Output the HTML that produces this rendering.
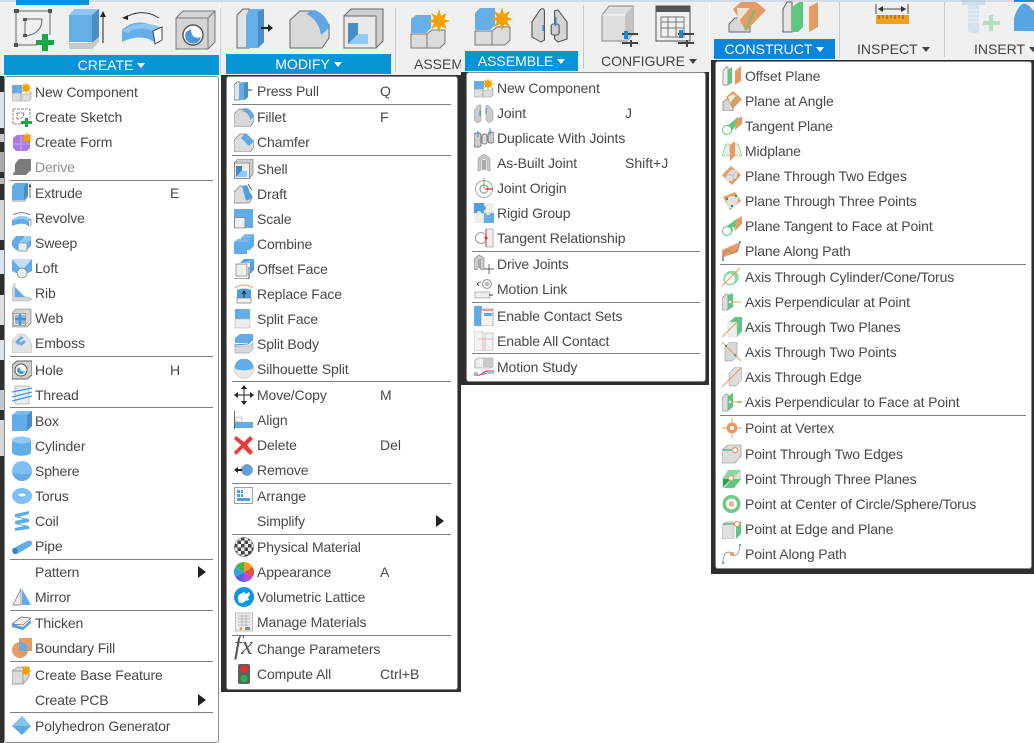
<!DOCTYPE html>
<html><head><meta charset="utf-8"><style>
html,body{margin:0;padding:0;background:#fff}
#p{position:relative;width:1034px;height:743px;overflow:hidden;background:#fff;font:14px/20px "Liberation Sans",sans-serif;color:#484848}
.a{position:absolute}
.d{position:absolute;background:#2f2f2f}
.m{position:absolute;background:#fff;border:1px solid #8a8a8a;border-radius:3px;box-sizing:border-box}
.w{position:absolute;top:0;width:0;height:0}
.r{position:absolute;left:0;width:300px;height:20px;white-space:nowrap}
.r svg{position:absolute;left:7px;top:0;width:20px;height:20px}
.r span{position:absolute;left:30px;letter-spacing:-.12px}
.r b{position:absolute;left:165px;font-weight:normal}
.r i{position:absolute;width:0;height:0;border-left:8px solid #222;border-top:6px solid transparent;border-bottom:6px solid transparent;top:4px}
.m2 .r svg,.m3 .r svg{left:8px}
.m2 .r span,.m3 .r span{left:31px}
.m2 .r b{left:154px}.m3 .r b{left:159px}
.s{position:absolute;height:1px;background:#808080}
.h{position:absolute;color:#fff;text-align:center;line-height:20px;height:20px;box-sizing:border-box}
.l{position:absolute;color:#444;white-space:nowrap}
.t{display:inline-block;width:0;height:0;border-top:5px solid currentColor;border-left:4px solid transparent;border-right:4px solid transparent;vertical-align:2px;margin-left:4px}
.v{position:absolute;width:1px;background:#c8c8c8}
</style></head><body><div id="p">

<!-- toolbar -->
<div class="a" style="left:0;top:0;width:1034px;height:76px;background:#f0f0f0"></div>
<div class="a" style="left:0;top:0;width:1034px;height:2px;background:#d3dbe9"></div>
<div class="a" style="left:16px;top:0;width:73px;height:5px;background:#0696d7"></div>
<div class="a" style="left:1014px;top:0;width:20px;height:2px;background:#0696d7"></div>
<div class="a" style="left:219px;top:3px;width:1px;height:72px;background:#fff"></div>
<div class="a" style="left:709px;top:3px;width:1px;height:58px;background:#fff"></div>
<div class="v" style="left:220px;top:8px;height:66px"></div>
<div class="v" style="left:395px;top:8px;height:64px"></div>
<div class="v" style="left:583px;top:5px;height:64px"></div>
<div class="v" style="left:839px;top:2px;height:55px"></div>
<div class="v" style="left:944px;top:2px;height:55px"></div>

<svg class="a" style="left:0;top:0" width="1034" height="60" viewBox="0 0 1034 60">
<!-- sketch -->
<g fill="none" stroke="#666" stroke-width="1"><path d="M16 11H50V35M16 11V45H37M25 19H42M25 19V34M42 19Q42 34 25 36"/></g>
<g fill="#555"><rect x="14" y="9" width="5" height="4"/><rect x="48" y="9" width="4" height="4"/><rect x="14" y="43" width="4" height="4"/><rect x="23" y="18" width="4" height="3"/><rect x="23" y="34" width="4" height="3"/></g>
<path d="M42 34h6v6h6v5h-6v6h-6v-6h-6v-5h6z" fill="#1ca64c"/>
<!-- extrude -->
<path d="M69 42V15l5-5h25l-7 5v27z" fill="#66aee8"/><path d="M69 15l5-6h25l-7 6z" fill="#8cc6f4"/><path d="M92 15l7-6v28l-7 6z" fill="#4a8ec7"/><path d="M69 43h23l7-6v5l-7 7H69z" fill="#c9c9c9"/><path d="M103 43V14" stroke="#222" stroke-width="1"/><path d="M100 17l3-6 3 6z" fill="#222"/>
<!-- revolve -->
<path d="M122 30c10-10 26-10 35 0l-3 12c-8-6-20-6-32 0z" fill="#66aee8"/><path d="M122 31c10-9 30-9 40-3l-5 5c-10-6-22-6-29 0z" fill="#8cc6f4"/><path d="M153 31l9-4v13l-7 4z" fill="#fff" stroke="#444"/><path d="M124 18c12-7 24-7 35 0" fill="none" stroke="#333"/><path d="M122 18l6-3v5z" fill="#222"/>
<!-- hole -->
<path d="M176 18l7-7h32v31l-7 7h-32z" fill="#d4d4d4" stroke="#777"/><path d="M176 18h32v31M208 18l7-7" fill="none" stroke="#777"/><circle cx="193" cy="35" r="10" fill="#fff" stroke="#555" stroke-width="1.4"/><path d="M186 32a8 8 0 1 0 15 5c-5 2-10 0-10-8z" fill="#4a96d8"/>
<!-- press pull -->
<path d="M237 48V15l6-6h6v39z" fill="#e3e3e3" stroke="#666"/><path d="M246 48V15l4-6h14v33l-6 6z" fill="#66aee8"/><path d="M258 12v36l6-6V9z" fill="#4a8ec7"/><path d="M261 28h8" stroke="#222" stroke-width="2"/><path d="M268 24l5 4-5 4z" fill="#222"/>
<!-- fillet -->
<path d="M290 48V20l10-9h15l14 14v13l-7 10z" fill="#d9d9d9" stroke="#666"/><path d="M306 14l8-4c8 2 15 10 15 18l-8 7c-1-9-7-18-15-21z" fill="#5ea7e2"/>
<!-- shell -->
<path d="M344 48V16l7-7h32v32l-7 7z" fill="#cfcfcf" stroke="#666"/><rect x="344" y="16" width="32" height="32" fill="#e9e9e9" stroke="#666"/><path d="M348 23h10v11h10v10h-20z" fill="#4a8ec7"/><path d="M358 34h10v10h-20z" fill="#90cbf8"/>
<!-- assemble clipped -->
<g><path d="M411 48V34h17v14z" fill="#dcdcdc" stroke="#777"/><path d="M427 48V34l5-4h13v13l-5 5z" fill="#dcdcdc" stroke="#777"/><path d="M411 33V19l5-4h15v13l-5 5z" fill="#66aee8"/><path d="M439 9l2 7 6-3-3 6 6 2-6 2 3 6-6-3-2 7-2-7-6 3 3-6-6-2 6-2-3-6 6 3z" fill="#f5a000"/></g>
<g transform="translate(64,-9)"><path d="M411 54V40h17v14z" fill="#dcdcdc" stroke="#777"/><path d="M428 54V40l5-4h13v13l-5 5z" fill="#dcdcdc" stroke="#777"/><path d="M411 39V22l5-5h15v17l-5 5z" fill="#66aee8"/><path d="M438 16l2 7 6-3-3 6 6 2-6 2 3 6-6-3-2 7-2-7-6 3 3-6-6-2 6-2-3-6 6 3z" fill="#f5a000"/></g>
<!-- joint toolbar -->
<g transform="translate(532 0) scale(1.13 1) translate(-526 0)"><path d="M526 22l7-12c2-2 4-2 4 2v28l-3 2-8-5zM557 22l-8-12-3 1v28l3 3 8-3z" fill="#d4d4d4" stroke="#555"/><rect x="543" y="24" width="7" height="11" rx="2" fill="#ccc" stroke="#555"/><path d="M536 25v6M547 17v9" stroke="#2f8ee0" stroke-width="1.5"/></g>
<!-- configure -->
<g transform="translate(12,0)"><path d="M590 15l7-9h24v28l-6 7h-25z" fill="#dedede" stroke="#888"/><path d="M613 15l8-9v28l-6 7h-2z" fill="#c2c2c2"/><path d="M590 15h23" stroke="#fff"/><path d="M610 34h16M610 43h16" stroke="#444" stroke-width="2"/><rect x="612" y="31" width="4" height="8" fill="#1a86d8"/><path d="M619 40v7" stroke="#444" stroke-width="2"/></g>
<g transform="translate(18,0)"><rect x="638" y="6" width="34" height="35" fill="#f0f0f0" stroke="#555"/><rect x="638" y="6" width="34" height="6" fill="#555"/><path d="M643 17h23v20h-23zM643 22h23M643 28h23M650 17v20M658 17v20" fill="none" stroke="#777"/><path d="M660 34h16M660 43h16" stroke="#444" stroke-width="2"/><rect x="661" y="30" width="4" height="8" fill="#1a86d8"/><path d="M669 40v7" stroke="#444" stroke-width="2"/></g>
<!-- construct -->
<g transform="translate(23,0)"><path d="M706 24l6-6h15v14h-21z" fill="#d8d8d8" stroke="#666"/><path d="M710 9l8-7h15l10 8-20 21z" fill="#e59b62"/><path d="M714 8h13l-12 14z" fill="#f0e5da"/><path d="M722 30l10-20" stroke="#5cc77e" stroke-width="1.5"/></g>
<g transform="translate(29,0)"><path d="M754 32V9l4-7h5v30z" fill="#e4e4e4" stroke="#666"/><path d="M763 32V7l7-5h4v25l-5 5z" fill="#5cc77e"/><path d="M780 32V7l9-5v25z" fill="#e59b62"/></g>
<!-- inspect -->
<g transform="translate(38,0)"><path d="M838 4v10M870 4v10M840 9h28" stroke="#444" fill="none"/><path d="M840 9l5-3v6zM868 9l-5-3v6z" fill="#333"/><rect x="838" y="15" width="33" height="9" fill="#f0a020"/><path d="M841 15v4M845 15v3M849 15v4M853 15v3M857 15v4M861 15v3M865 15v4" stroke="#8a5a10"/></g>
<!-- insert -->
<g opacity=".45"><g transform="translate(45,0)"><rect x="917" y="0" width="23" height="5" fill="#a9c8e2"/><path d="M923 5h11v27l-5 2-6-3z" fill="#b5d2ea"/><path d="M923 10h11M923 14h11M923 18h11M923 22h11" stroke="#e8f1f8"/></g><path d="M983 21h6v-6h4v6h7v4h-7v6h-4v-6h-6z" fill="#66cc88"/></g>
<path d="M1014 31V18c3-10 8-16 12-14 3 1 6 5 8 7V31z" fill="#5aa5e0"/>
</svg>

<div class="h" style="left:4px;top:55px;width:215px;background:#0696d7">CREATE<span class="t"></span></div>
<div class="h" style="left:226px;top:54px;width:165px;background:#0696d7">MODIFY<span class="t"></span></div>
<div class="h" style="left:465px;top:51px;width:113px;background:#0696d7">ASSEMBLE<span class="t"></span></div>
<div class="h" style="left:714px;top:39px;width:121px;background:#0a85dc">CONSTRUCT<span class="t"></span></div>
<div class="l" style="left:414px;top:54px;width:47px;overflow:hidden">ASSEMBLE</div>
<div class="l" style="left:601px;top:51px">CONFIGURE<span class="t"></span></div>
<div class="l" style="left:857px;top:39px">INSPECT<span class="t"></span></div>
<div class="l" style="left:974px;top:39px">INSERT<span class="t"></span></div>

<!-- left edge fragments -->
<div class="d" style="left:0;top:76px;width:4px;height:667px"></div>
<div class="a" style="left:0;top:92px;width:4px;height:36px;background:#dfe3ea"></div>
<div class="a" style="left:0;top:134px;width:4px;height:8px;background:#c9c9c9"></div>
<div class="a" style="left:0;top:152px;width:4px;height:20px;background:#aaa"></div>
<div class="a" style="left:0;top:178px;width:4px;height:6px;background:#bbb"></div>
<div class="a" style="left:0;top:200px;width:4px;height:40px;background:#d8d8d8"></div>
<div class="a" style="left:0;top:250px;width:4px;height:24px;background:#d8e3ef"></div>
<div class="a" style="left:0;top:295px;width:4px;height:30px;background:#dfdfdf"></div>
<div class="a" style="left:0;top:340px;width:4px;height:20px;background:#dfe3ea"></div>
<div class="a" style="left:0;top:390px;width:4px;height:20px;background:#bfc7cf"></div>
<div class="a" style="left:0;top:420px;width:4px;height:36px;background:#d8d8d8"></div>

<!-- shadows -->
<div class="d" style="left:221px;top:75px;width:240px;height:617px"></div>
<div class="d" style="left:461px;top:72px;width:248px;height:313px"></div>
<div class="d" style="left:711px;top:60px;width:323px;height:514px"></div>

<!-- CREATE -->
<div class="m" style="left:4px;top:76px;width:215px;height:667px"></div>
<div class="s" style="left:10px;top:180px;width:203px"></div>
<div class="s" style="left:10px;top:356px;width:203px"></div>
<div class="s" style="left:10px;top:407px;width:203px"></div>
<div class="s" style="left:10px;top:559px;width:203px"></div>
<div class="s" style="left:10px;top:610px;width:203px"></div>
<div class="s" style="left:10px;top:661px;width:203px"></div>
<div class="s" style="left:10px;top:712px;width:203px"></div>
<div class="w" style="left:5px">
<div class="r" style="top:82px"><svg viewBox="0 0 20 20"><path d="M0 19v-8h9v8z" fill="#ddd" stroke="#999" stroke-width=".6"/><path d="M9 19v-7h8l2-2v7l-2 2z" fill="#ddd" stroke="#999" stroke-width=".6"/><path d="M0 11V3h10v8z" fill="#62ade8"/><path d="M14 0l1 3 3-1-1 3 3 1-3 1 1 3-3-1-1 3-1-3-3 1 1-3-3-1 3-1-1-3 3 1z" fill="#f5a000"/></svg><span>New Component</span></div>
<div class="r" style="top:107px"><svg viewBox="0 0 20 20"><path d="M1 2h17v9M1 2v15h10M5 6h7M5 6v6M12 6q0 6-7 6" fill="none" stroke="#666" stroke-width=".8" stroke-dasharray="3 1"/><path d="M13 11h3v3h4v3h-4v3h-3v-3H9v-3h4z" fill="#1ca64c"/></svg><span>Create Sketch</span></div>
<div class="r" style="top:132px"><svg viewBox="0 0 20 20"><path d="M1 6l4-3h9l4 4v9l-3 3H4l-3-3z" fill="#a77be0"/><path d="M1 12h17M9 4v15" stroke="#c7a8ee" fill="none"/><path d="M15 0l1 3 3-1-1 3 2 1-2 1 1 3-3-1-1 3-1-3-3 1 1-3-3-1 3-1-1-3 3 1z" fill="#f5a000"/></svg><span>Create Form</span></div>
<div class="r" style="top:157px;color:#909090"><svg viewBox="0 0 20 20"><path d="M1 17l2-3V7l4-5h12v11l-5 5H1z" fill="#7a7a7a"/></svg><span>Derive</span></div>
<div class="r" style="top:183px"><svg viewBox="0 0 20 20"><path d="M0 17V3l3-3h13v13l-3 4z" fill="#62ade8"/><path d="M12 3l4-3v13l-4 4z" fill="#4a8ec7"/><path d="M0 17h13l3-4v2l-3 4H0z" fill="#c9c9c9"/><path d="M18 15V2M17 4l1-3 1 3" stroke="#333" fill="none" stroke-width=".7"/></svg><span>Extrude</span><b>E</b></div>
<div class="r" style="top:208px"><svg viewBox="0 0 20 20"><path d="M0 12c5-5 13-5 19 0l-2 6c-4-3-10-3-17 0z" fill="#62ade8"/><path d="M1 11c5-4 13-4 18 0l-3 2c-5-3-10-3-14 0z" fill="#90cbf8"/><path d="M16 13l3-2v6l-2 1z" fill="#fff" stroke="#555" stroke-width=".5"/><path d="M1 7c5-3 12-3 17 0" fill="none" stroke="#555" stroke-width=".7"/></svg><span>Revolve</span></div>
<div class="r" style="top:233px"><svg viewBox="0 0 20 20"><path d="M0 8l4-5h8l2 4-6 1v8l-4 1-4-4z" fill="#62ade8"/><path d="M8 8l6-5h5v6l-3 2h-6z" fill="#90cbf8"/><rect x="6" y="10" width="9" height="8" fill="#eee" stroke="#777" stroke-width=".7"/><path d="M15 10l4-4v7l-4 4z" fill="#62ade8"/></svg><span>Sweep</span></div>
<div class="r" style="top:258px"><svg viewBox="0 0 20 20"><path d="M0 1l8 9h4l8-9v12l-6 3H6l-6-3z" fill="#62ade8"/><path d="M0 1h20l-8 9H8z" fill="#c5e0f6"/><circle cx="10" cy="15" r="5" fill="#eee" stroke="#777" stroke-width=".7"/></svg><span>Loft</span></div>
<div class="r" style="top:283px"><svg viewBox="0 0 20 20"><path d="M0 18V5l3-5v14l14 0 3 2-3 2z" fill="#d4d4d4" stroke="#aaa" stroke-width=".5"/><path d="M3 4l10 10H3z" fill="#62ade8"/></svg><span>Rib</span></div>
<div class="r" style="top:308px"><svg viewBox="0 0 20 20"><path d="M0 5l4-4h15v14l-4 4H0z" fill="#d4d4d4" stroke="#777" stroke-width=".6"/><rect x="1.500" y="5.500" width="12" height="12" fill="#eee" stroke="#777" stroke-width=".6"/><rect x="3" y="7" width="10" height="9" fill="#9bb4c8"/><path d="M8 6v11M3 11h11" stroke="#3e97e0" stroke-width="2.500"/></svg><span>Web</span></div>
<div class="r" style="top:333px"><svg viewBox="0 0 20 20"><path d="M0 20V9C2 4 6 1 10 1c5 1 9 6 10 12v7z" fill="#e4e4e4" stroke="#999" stroke-width=".4"/><path d="M3 9l6-6 3 2-5 3 2 1-3 3zM7 11l5-4 2 2-5 4z" fill="#62ade8"/></svg><span>Emboss</span></div>
<div class="r" style="top:360px"><svg viewBox="0 0 20 20"><path d="M0 5l5-4h15v14l-5 4H0z" fill="#cfcfcf" stroke="#666"/><circle cx="9" cy="10" r="6" fill="#fff" stroke="#555"/><path d="M5 9a4 4 0 1 0 8 2c-3 1-5 0-5-4z" fill="#4a96d8"/></svg><span>Hole</span><b>H</b></div>
<div class="r" style="top:385px"><svg viewBox="0 0 20 20"><rect x="3" y="1" width="14" height="18" fill="#ececec" stroke="#999" stroke-width=".6"/><path d="M0 7l20-4M0 12l20-5M0 16l20-5" stroke="#2f9ae8" stroke-width="1.200"/></svg><span>Thread</span></div>
<div class="r" style="top:411px"><svg viewBox="0 0 20 20"><path d="M0 5l5-5h15v15l-5 5H0z" fill="#4a8ec7"/><rect y="4" width="15" height="16" fill="#62ade8"/><path d="M0 4l5-4h15l-5 4z" fill="#78bdf2"/></svg><span>Box</span></div>
<div class="r" style="top:436px"><svg viewBox="0 0 20 20"><path d="M0 4v12c0 5 19 5 19 0V4z" fill="#62ade8"/><ellipse cx="9.500" cy="4" rx="9.500" ry="3.500" fill="#90cbf8"/></svg><span>Cylinder</span></div>
<div class="r" style="top:461px"><svg viewBox="0 0 20 20"><circle cx="10" cy="10" r="10" fill="#7cc0f6"/><path d="M0 11c3 3 17 3 20 0-1 5-5 9-10 9S1 16 0 11z" fill="#62ade8"/></svg><span>Sphere</span></div>
<div class="r" style="top:486px"><svg viewBox="0 0 20 20"><ellipse cx="10" cy="10" rx="10" ry="8" fill="#7cc0f6"/><ellipse cx="10" cy="9" rx="4" ry="2" fill="#fff" stroke="#4a8ec7" stroke-width=".5"/></svg><span>Torus</span></div>
<div class="r" style="top:511px"><svg viewBox="0 0 20 20"><path d="M3 3l14-3v3L7 6l10 2v3L7 13l10 2v3L3 20v-3l9-2-9-2v-3l9-2-9-2z" fill="#5caee8"/></svg><span>Coil</span></div>
<div class="r" style="top:536px"><svg viewBox="0 0 20 20"><path d="M0 13L15 5c3-1 5 0 5 2s-1 3-3 4L5 18c-3 1-5-1-5-5z" fill="#62ade8"/><ellipse cx="3" cy="15" rx="2.500" ry="3" fill="#3d80b8"/></svg><span>Pipe</span></div>
<div class="r" style="top:562px"><span>Pattern</span><i style="left:193px"></i></div>
<div class="r" style="top:587px"><svg viewBox="0 0 20 20"><path d="M1 18L9 2v16z" fill="#ececec" stroke="#777" stroke-width=".7"/><path d="M10 2l9 16h-9z" fill="#62ade8"/></svg><span>Mirror</span></div>
<div class="r" style="top:613px"><svg viewBox="0 0 20 20"><path d="M0 11l9-7 10 1-8 7z" fill="#eee" stroke="#666" stroke-width=".7"/><path d="M0 11l11 3 8-7v3l-8 7-11-3z" fill="#4f9ee0"/></svg><span>Thicken</span></div>
<div class="r" style="top:638px"><svg viewBox="0 0 20 20"><rect x="7" y="0" width="13" height="13" fill="#e59b62"/><circle cx="8" cy="12" r="8" fill="#e59b62"/><path d="M7 4a8 8 0 0 1 9 9H7z" fill="#62ade8"/></svg><span>Boundary Fill</span></div>
<div class="r" style="top:665px"><svg viewBox="0 0 20 20"><path d="M0 6l6-4h11v10l-6 7H0z" fill="#dcdcdc" stroke="#888" stroke-width=".7"/><path d="M0 6h11v13" fill="none" stroke="#888" stroke-width=".7"/><path d="M14 0l1 3 3-1-1 3 3 1-3 1 1 3-3-1-1 3-1-3-3 1 1-3-3-1 3-1-1-3 3 1z" fill="#f5a000"/></svg><span>Create Base Feature</span></div>
<div class="r" style="top:690px"><span>Create PCB</span><i style="left:193px"></i></div>
<div class="r" style="top:716px"><svg viewBox="0 0 20 20"><path d="M10 0l9 10-9 9-10-9z" fill="#5ea7e2"/><path d="M10 0l9 10H0z" fill="#85c2f2"/></svg><span>Polyhedron Generator</span></div>
</div>

<!-- MODIFY -->
<div class="m" style="left:226px;top:76px;width:232px;height:614px"></div>
<div class="s" style="left:232px;top:104px;width:219px"></div>
<div class="s" style="left:232px;top:155px;width:219px"></div>
<div class="s" style="left:232px;top:381px;width:219px"></div>
<div class="s" style="left:232px;top:483px;width:219px"></div>
<div class="s" style="left:232px;top:534px;width:219px"></div>
<div class="s" style="left:232px;top:635px;width:219px"></div>
<div class="w m2" style="left:226px">
<div class="r" style="top:81px"><svg viewBox="0 0 20 20"><path d="M0 19V4l3-3h3v18z" fill="#e3e3e3" stroke="#666" stroke-width=".7"/><path d="M5 19V3l3-2h6v15l-3 3z" fill="#62ade8"/><path d="M10 3v16l4-3V1z" fill="#4a8ec7"/><path d="M14 9h4" stroke="#333"/></svg><span>Press Pull</span><b>Q</b></div>
<div class="r" style="top:107px"><svg viewBox="0 0 20 20"><path d="M0 20V7l5-5h7l8 7v5l-4 6z" fill="#d9d9d9" stroke="#888" stroke-width=".7"/><path d="M7 3l5-2c4 1 8 5 8 9l-4 3c0-5-4-8-9-10z" fill="#5ea7e2"/></svg><span>Fillet</span><b>F</b></div>
<div class="r" style="top:132px"><svg viewBox="0 0 20 20"><path d="M0 20V8l6-6h5l9 8v5l-4 5z" fill="#dcdcdc" stroke="#777" stroke-width=".7"/><path d="M7 6l5-5 8 8-5 5z" fill="#5ea7e2"/></svg><span>Chamfer</span></div>
<div class="r" style="top:159px"><svg viewBox="0 0 20 20"><path d="M0 20V4l4-4h15v15l-4 5z" fill="#cfcfcf" stroke="#777" stroke-width=".7"/><rect x=".5" y="4" width="15" height="15.500" fill="#eee" stroke="#777" stroke-width=".7"/><path d="M2 7h6v5h5v6H2z" fill="#3d86c4"/><path d="M7 12h6v6H2z" fill="#8fcaf8"/></svg><span>Shell</span></div>
<div class="r" style="top:184px"><svg viewBox="0 0 20 20"><path d="M0 19V8l6-6h4l8 10v2l-3 5z" fill="#dcdcdc" stroke="#777" stroke-width=".7"/><path d="M8 2l5-1 5 13-6 3z" fill="#4f9ee0"/><path d="M14 0l4 6" stroke="#333" stroke-width=".7"/></svg><span>Draft</span></div>
<div class="r" style="top:209px"><svg viewBox="0 0 20 20"><rect width="19" height="19" fill="#62ade8"/><rect x=".5" y="8.500" width="10.500" height="10.500" fill="#eee" stroke="#777" stroke-width=".7"/></svg><span>Scale</span></div>
<div class="r" style="top:234px"><svg viewBox="0 0 20 20"><path d="M7 4l4-4h9v12l-4 4h-3v4H0V8l4-3h3z" fill="#62ade8"/><path d="M7 4h9l4-4h-9zM0 8h13l3-3H4z" fill="#78bdf2"/></svg><span>Combine</span></div>
<div class="r" style="top:259px"><svg viewBox="0 0 20 20"><path d="M6 4l4-4h10v11l-4 4V4z" fill="#4f9ee0"/><path d="M6 4h10l4-4" fill="#78bdf2"/><path d="M0 20h15V8" fill="none" stroke="#555"/><rect x="2" y="5" width="11" height="12" fill="#eee" stroke="#777" stroke-width=".7"/></svg><span>Offset Face</span></div>
<div class="r" style="top:284px"><svg viewBox="0 0 20 20"><path d="M1 4c5-4 13-4 18 0" fill="none" stroke="#e59b62"/><path d="M3 6c4-2 10-2 14 0v10H3z" fill="#4f9ee0"/><path d="M10 7v7M8 10l2-3 2 3" stroke="#222" fill="none"/><rect x="3" y="14" width="14" height="5" fill="#f0f0f0" stroke="#777" stroke-width=".7"/></svg><span>Replace Face</span></div>
<div class="r" style="top:309px"><svg viewBox="0 0 20 20"><rect x="1" width="15" height="9" fill="#62ade8"/><rect x="1" y="10" width="15" height="9" fill="#eee" stroke="#aaa" stroke-width=".5"/><path d="M1 9.500h15" stroke="#6db4ec"/></svg><span>Split Face</span></div>
<div class="r" style="top:334px"><svg viewBox="0 0 20 20"><path d="M1 4l5-4h13v6l-4 3H1z" fill="#62ade8"/><path d="M1 12h14l4-3v6l-4 4H1z" fill="#d9d9d9" stroke="#888" stroke-width=".5"/><path d="M0 11l14-1 5-5" stroke="#3e97e0" fill="none"/></svg><span>Split Body</span></div>
<div class="r" style="top:359px"><svg viewBox="0 0 20 20"><circle cx="10" cy="10" r="9.500" fill="#e8e8e8" stroke="#aaa" stroke-width=".5"/><path d="M.5 9a9.500 9.500 0 0 1 19 0c-3 3-16 3-19 0z" fill="#62ade8"/></svg><span>Silhouette Split</span></div>
<div class="r" style="top:385px"><svg viewBox="0 0 20 20"><path d="M10 2v16M1 10h18" stroke="#222"/><path d="M10 0l3 4H7zM10 20l3-4H7zM0 10l4-3v6zM20 10l-4-3v6z" fill="#222"/></svg><span>Move/Copy</span><b>M</b></div>
<div class="r" style="top:410px"><svg viewBox="0 0 20 20"><path d="M.5 1v18" stroke="#666"/><rect x="2" y="7" width="6" height="5" fill="#f2f2f2" stroke="#aaa" stroke-width=".5"/><rect x="1" y="12" width="18" height="6" fill="#62ade8"/></svg><span>Align</span></div>
<div class="r" style="top:435px"><svg viewBox="0 0 20 20"><path d="M2 1l8 6 6-6 3 3-6 6 6 7-3 3-7-7-7 7-2-3 7-7-7-6z" fill="#ec3b3b"/></svg><span>Delete</span><b>Del</b></div>
<div class="r" style="top:460px"><svg viewBox="0 0 20 20"><circle cx="13" cy="10" r="5.500" fill="#62a0e0" stroke="#777" stroke-width=".5"/><path d="M0 10l4-3v2h4v2H4v2z" fill="#222"/></svg><span>Remove</span></div>
<div class="r" style="top:486px"><svg viewBox="0 0 20 20"><rect x=".5" y="1.500" width="18" height="16" fill="#fafafa" stroke="#8a8a8a" stroke-width=".8"/><path d="M3 4h3v3H3zM7 4h2v3H7zM3 8h3v3H3zM7 8h2v3H7zM3 12h13v3H3z" fill="#4f9ee0"/></svg><span>Arrange</span></div>
<div class="r" style="top:511px"><span>Simplify</span><i style="left:210px"></i></div>
<div class="r" style="top:537px"><svg viewBox="0 0 20 20"><defs><pattern id="ck" width="7" height="7" patternUnits="userSpaceOnUse"><rect width="7" height="7" fill="#eee"/><rect width="3.500" height="3.500" fill="#444"/><rect x="3.500" y="3.500" width="3.500" height="3.500" fill="#444"/></pattern></defs><circle cx="10" cy="10" r="9.500" fill="url(#ck)" stroke="#555" stroke-width=".5"/></svg><span>Physical Material</span></div>
<div class="r" style="top:562px"><svg viewBox="0 0 20 20"><path d="M10 10V0a10 10 0 0 1 8.660 5z" fill="#f39c20"/><path d="M10 10l8.660-5a10 10 0 0 1 0 10z" fill="#e5503a"/><path d="M10 10l8.660 5A10 10 0 0 1 10 20z" fill="#b04fd8"/><path d="M10 10v10a10 10 0 0 1-8.660-5z" fill="#5b5fe0"/><path d="M10 10l-8.660 5a10 10 0 0 1 0-10z" fill="#30a8d8"/><path d="M10 10L1.340 5A10 10 0 0 1 10 0z" fill="#45b54a"/></svg><span>Appearance</span><b>A</b></div>
<div class="r" style="top:587px"><svg viewBox="0 0 20 20"><circle cx="10" cy="10" r="10" fill="#0d95e0"/><path d="M4 11c0-4 3-4 6-6l2 2 3-2 1 3-2 2 1 3-4 1c-1 2-4 3-5 1l-1 1z" fill="#fff"/></svg><span>Volumetric Lattice</span></div>
<div class="r" style="top:612px"><svg viewBox="0 0 20 20"><rect x="1.500" y="1" width="17" height="18" fill="#eee" stroke="#999" stroke-width=".6"/><path d="M4 4h12M4 7h12M4 10h12M4 13h12M8 3v11M12 3v11" stroke="#aaa" stroke-width=".8"/><circle cx="7" cy="16.500" r="1.500" fill="#e5a040"/><rect x="11" y="15" width="5" height="3" fill="#888"/></svg><span>Manage Materials</span></div>
<div class="r" style="top:639px"><svg style="overflow:visible" viewBox="0 0 20 20"><text x="0" y="15" font-family="Liberation Serif,serif" font-style="italic" font-size="26" fill="#555">fx</text></svg><span>Change Parameters</span></div>
<div class="r" style="top:664px"><svg viewBox="0 0 20 20"><rect x="4" y="0" width="12" height="20" rx="2" fill="#606060"/><circle cx="10" cy="5" r="3.700" fill="#ec2b2b"/><circle cx="10" cy="14.500" r="3.700" fill="#23b04f"/></svg><span>Compute All</span><b>Ctrl+B</b></div>
</div>

<!-- ASSEMBLE -->
<div class="m" style="left:466px;top:72px;width:240px;height:310px"></div>
<div class="s" style="left:472px;top:251px;width:228px"></div>
<div class="s" style="left:472px;top:302px;width:228px"></div>
<div class="s" style="left:472px;top:353px;width:228px"></div>
<div class="w m3" style="left:466px">
<div class="r" style="top:78px"><svg viewBox="0 0 20 20"><path d="M0 19v-8h9v8z" fill="#ddd" stroke="#999" stroke-width=".6"/><path d="M9 19v-7h8l2-2v7l-2 2z" fill="#ddd" stroke="#999" stroke-width=".6"/><path d="M0 11V3h10v8z" fill="#62ade8"/><path d="M14 0l1 3 3-1-1 3 3 1-3 1 1 3-3-1-1 3-1-3-3 1 1-3-3-1 3-1-1-3 3 1z" fill="#f5a000"/></svg><span>New Component</span></div>
<div class="r" style="top:103px"><svg viewBox="0 0 20 20"><path d="M0 8l4-6h3v16l-3 2-4-3zM19 8l-5-6-2 1v14l3 3 4-3z" fill="#ccc" stroke="#888" stroke-width=".5"/><path d="M6 7v6M12 5v6" stroke="#2f8ee0"/></svg><span>Joint</span><b>J</b></div>
<div class="r" style="top:128px"><svg viewBox="0 0 20 20"><rect x="0" y="5" width="7" height="14" rx="2" fill="#ccc" stroke="#555" stroke-width=".7"/><rect x="8" y="6" width="5" height="10" rx="2" fill="#ddd" stroke="#555" stroke-width=".7"/><rect x="14" y="4" width="6" height="11" rx="2" fill="#ccc" stroke="#555" stroke-width=".7"/><path d="M4 3v6M16 0v7" stroke="#2f8ee0"/></svg><span>Duplicate With Joints</span></div>
<div class="r" style="top:153px"><svg viewBox="0 0 20 20"><path d="M4 18V5l6-4 6 4v13l-3-1V7l-3-2-3 2v10z" fill="#c9c9c9" stroke="#888" stroke-width=".5"/><path d="M8 7h4v10H8z" fill="#aaa"/></svg><span>As-Built Joint</span><b>Shift+J</b></div>
<div class="r" style="top:178px"><svg viewBox="0 0 20 20"><circle cx="10" cy="11" r="8.500" fill="#fafafa" stroke="#aaa"/><circle cx="10" cy="11" r="4" fill="#fff" stroke="#888"/><path d="M10 0v10" stroke="#7aa83a"/><path d="M11 11h8" stroke="#e02020" stroke-width="1.200"/></svg><span>Joint Origin</span></div>
<div class="r" style="top:203px"><svg viewBox="0 0 20 20"><rect width="20" height="20" fill="#eee"/><path d="M0 0h10v3a2 2 0 0 1 0 4v3H7a2 2 0 0 0-4 0H0z" fill="#4f9ee0"/><path d="M10 20h10V10h-4a2 2 0 0 1-4 0h-2z" fill="#62ade8"/><path d="M10 0v20M0 10h20" stroke="#aaa" stroke-width=".4"/></svg><span>Rigid Group</span></div>
<div class="r" style="top:228px"><svg viewBox="0 0 20 20"><circle cx="7" cy="10" r="5.500" fill="#fff" stroke="#999"/><rect x="12" y="1" width="7" height="18" fill="#eee" stroke="#999" stroke-width=".7"/><path d="M12 1v18" stroke="#e02020" stroke-width=".8"/><circle cx="12" cy="10" r="1.500" fill="#e02020"/></svg><span>Tangent Relationship</span></div>
<div class="r" style="top:254px"><svg viewBox="0 0 20 20"><path d="M0 15V5l5-4 5 3v11l-2 1-3-3-3 3z" fill="#ccc" stroke="#777" stroke-width=".6"/><path d="M4 5h3v9H4z" fill="#aaa"/><path d="M15 10v10M10 15h10" stroke="#333" stroke-width=".7"/></svg><span>Drive Joints</span></div>
<div class="r" style="top:279px"><svg viewBox="0 0 20 20"><circle cx="13" cy="5" r="4.500" fill="#eee" stroke="#999"/><circle cx="13" cy="5" r="2" fill="#bbb"/><path d="M3 6a4 4 0 0 1 4-3M5 7L3 4" stroke="#333" fill="none" stroke-width=".8"/><rect x="1" y="13" width="15" height="6" fill="#eee" stroke="#888" stroke-width=".6"/><path d="M15 16h4" stroke="#333"/></svg><span>Motion Link</span></div>
<div class="r" style="top:306px"><svg viewBox="0 0 20 20"><rect x="0" y="0" width="8" height="20" fill="#62ade8"/><rect x="7" y="3" width="12" height="17" fill="#f4f4f4" stroke="#888" stroke-width=".6"/><rect x="7" y="3" width="12" height="2" fill="#e3a0a0"/><rect x="10" y="7" width="8" height="3" fill="#62ade8"/></svg><span>Enable Contact Sets</span></div>
<div class="r" style="top:331px"><svg viewBox="0 0 20 20"><rect x="0" y="0" width="9" height="20" fill="#f2f2f2" stroke="#aaa" stroke-width=".6"/><rect x="11" y="2" width="8" height="18" fill="#f2f2f2" stroke="#aaa" stroke-width=".6"/><path d="M5 8h14M9 7v13M11 7v13" stroke="#e5a5a5" stroke-width=".8"/></svg><span>Enable All Contact</span></div>
<div class="r" style="top:357px"><svg viewBox="0 0 20 20"><path d="M1 10V3l3-2h15v8l-2 2H1z" fill="#eee" stroke="#888" stroke-width=".6"/><rect x="9" y="1" width="9" height="9" fill="#c9c9c9"/><path d="M0 18h6l6-4h8" stroke="#e02020" fill="none"/><path d="M0 16h4M8 18l4-2h8" stroke="#2f8ee0" fill="none"/></svg><span>Motion Study</span></div>
</div>

<!-- CONSTRUCT -->
<div class="m" style="left:715px;top:61px;width:317px;height:508px"></div>
<div class="s" style="left:720px;top:264px;width:306px"></div>
<div class="s" style="left:720px;top:415px;width:306px"></div>
<div class="w" style="left:715px">
<div class="r" style="top:66px"><svg viewBox="0 0 20 20"><path d="M1 19V5l3-4h2v18z" fill="#eee" stroke="#777" stroke-width=".7"/><path d="M6 19V4l4-3v16z" fill="#5cc77e"/><path d="M13 19V5l6-5v15z" fill="#e59b62"/></svg><span>Offset Plane</span></div>
<div class="r" style="top:91px"><svg viewBox="0 0 20 20"><path d="M1 20v-9l4-3h6v12z" fill="#d8d8d8" stroke="#666" stroke-width=".6"/><path d="M4 6l7-6 9 8-9 10-2-3z" fill="#e59b62"/><path d="M6 6l5-3 3 2-6 7z" fill="#f0e5da"/><path d="M9 14l5-8" stroke="#5cc77e"/></svg><span>Plane at Angle</span></div>
<div class="r" style="top:116px"><svg viewBox="0 0 20 20"><path d="M5 10l11-9 1 5-10 12c-6 3-8-4-2-8z" fill="#5cc77e"/><circle cx="5" cy="14" r="4.500" fill="#fff" stroke="#5cc77e"/><path d="M14 4l6-4v8l-7 6z" fill="#e59b62"/></svg><span>Tangent Plane</span></div>
<div class="r" style="top:141px"><svg viewBox="0 0 20 20"><path d="M0 15L4 3h4v12zM20 15L16 3h-4v12z" fill="#e4efe6" stroke="#7fbf90" stroke-width=".6"/><path d="M8 4l5-4v15l-5 5z" fill="#e59b62"/></svg><span>Midplane</span></div>
<div class="r" style="top:166px"><svg viewBox="0 0 20 20"><path d="M0 9l9-9 10 9-9 10z" fill="#e59b62"/><path d="M4 9l5-5h6v7l-5 4H4z" fill="#e0e0e0"/><path d="M4 9h7v6M11 9l4-5" fill="none" stroke="#999" stroke-width=".5"/></svg><span>Plane Through Two Edges</span></div>
<div class="r" style="top:191px"><svg viewBox="0 0 20 20"><path d="M1 6l12-5 6 9-11 9z" fill="#e59b62"/><path d="M4 8l4-3h8v6l-5 6H6z" fill="#e0e0e0"/><circle cx="5" cy="8" r="1.200" fill="#1ca64c"/><circle cx="14" cy="5" r="1.200" fill="#1ca64c"/><circle cx="10" cy="15" r="1.200" fill="#1ca64c"/></svg><span>Plane Through Three Points</span></div>
<div class="r" style="top:216px"><svg viewBox="0 0 20 20"><path d="M5 10l11-8 1 5-10 12c-6 3-8-4-2-9z" fill="#5cc77e"/><circle cx="5" cy="15" r="4.500" fill="#fff" stroke="#5cc77e"/><path d="M14 4l6-4v8l-7 7z" fill="#e59b62"/><circle cx="11" cy="12" r="1.200" fill="#fff"/></svg><span>Plane Tangent to Face at Point</span></div>
<div class="r" style="top:241px"><svg viewBox="0 0 20 20"><path d="M0 19V9l18-8-2 10-14 5z" fill="#e59b62"/><path d="M1 19C2 7 7 8 10 12c3 1 7-4 8-11" fill="none" stroke="#888" stroke-width=".7"/><circle cx="18" cy="1" r="1" fill="#1ca64c"/><circle cx="1" cy="19" r="1" fill="#1ca64c"/></svg><span>Plane Along Path</span></div>
<div class="r" style="top:267px"><svg viewBox="0 0 20 20"><ellipse cx="9" cy="11" rx="8" ry="7" fill="#8ad8a2" transform="rotate(-30 9 11)"/><ellipse cx="8" cy="12" rx="5" ry="5" fill="#fff"/><path d="M0 19L18 1" stroke="#e59b62"/></svg><span>Axis Through Cylinder/Cone/Torus</span></div>
<div class="r" style="top:292px"><svg viewBox="0 0 20 20"><path d="M0 18V6l4-4h2v16z" fill="#ddd" stroke="#777" stroke-width=".6"/><path d="M6 18V3l5-2v14z" fill="#5cc77e"/><path d="M8 10h11" stroke="#e59b62"/><circle cx="8" cy="10" r="1.200" fill="#fff"/></svg><span>Axis Perpendicular at Point</span></div>
<div class="r" style="top:317px"><svg viewBox="0 0 20 20"><path d="M7 5l6-5h7v14l-5 6H7z" fill="#5cc77e"/><rect x="6" y="5" width="9" height="15" fill="#eee" stroke="#ccc" stroke-width=".5"/><path d="M0 20L15 5" stroke="#e59b62"/></svg><span>Axis Through Two Planes</span></div>
<div class="r" style="top:342px"><svg viewBox="0 0 20 20"><path d="M3 19V5l5-5h7v14l-5 5z" fill="#d8d8d8" stroke="#888" stroke-width=".5"/><path d="M0 0l19 19" stroke="#e59b62"/><circle cx="4" cy="4" r="1" fill="#1ca64c"/><circle cx="13" cy="13" r="1" fill="#1ca64c"/></svg><span>Axis Through Two Points</span></div>
<div class="r" style="top:367px"><svg viewBox="0 0 20 20"><path d="M7 19V6l6-6h7v13l-6 6z" fill="#dcdcdc" stroke="#999" stroke-width=".5"/><path d="M0 20L19 1" stroke="#e59b62"/></svg><span>Axis Through Edge</span></div>
<div class="r" style="top:392px"><svg viewBox="0 0 20 20"><path d="M0 19V6l4-4h2v17z" fill="#ddd" stroke="#777" stroke-width=".6"/><path d="M6 19V4l5-3v14z" fill="#5cc77e"/><path d="M8 10h10" stroke="#e59b62"/><path d="M15 10h5" stroke="#1ca64c"/><circle cx="8" cy="10" r="1.200" fill="#fff"/></svg><span>Axis Perpendicular to Face at Point</span></div>
<div class="r" style="top:418px"><svg viewBox="0 0 20 20"><path d="M10 0v20M0 10h20" stroke="#e59b62"/><circle cx="10" cy="10" r="5.500" fill="#e59b62"/><circle cx="10" cy="10" r="2" fill="#fff"/></svg><span>Point at Vertex</span></div>
<div class="r" style="top:444px"><svg viewBox="0 0 20 20"><path d="M0 6l6-5h13v11l-6 7H0z" fill="#dcdcdc" stroke="#888" stroke-width=".6"/><path d="M1 6h12" stroke="#1ca64c"/><circle cx="13" cy="6" r="2.500" fill="#fff" stroke="#e59b62" stroke-width="1.200"/></svg><span>Point Through Two Edges</span></div>
<div class="r" style="top:469px"><svg viewBox="0 0 20 20"><path d="M0 19V8l6-7h13v10l-8 8z" fill="#ddd"/><path d="M1 18V9l9 0z" fill="#1ca64c"/><path d="M2 19l8-9 9 0-7 9z" fill="#5cc77e"/><path d="M6 1h13l-9 9H1z" fill="#8ad8a2"/><circle cx="9" cy="9" r="2.500" fill="#fff" stroke="#e59b62" stroke-width="1.200"/></svg><span>Point Through Three Planes</span></div>
<div class="r" style="top:494px"><svg viewBox="0 0 20 20"><circle cx="9.500" cy="10" r="9" fill="#6dcb8a"/><circle cx="9.500" cy="10" r="5.500" fill="#fff"/><circle cx="9.500" cy="10" r="2.500" fill="#e59b62"/><circle cx="9.500" cy="10" r=".9" fill="#fff"/></svg><span>Point at Center of Circle/Sphere/Torus</span></div>
<div class="r" style="top:519px"><svg viewBox="0 0 20 20"><path d="M0 20V6l4-3h8v17z" fill="#e0e0e0" stroke="#999" stroke-width=".5"/><path d="M1 5h11" stroke="#1ca64c"/><path d="M14 20V8l5-6v13z" fill="#5cc77e"/><circle cx="15" cy="5" r="2.500" fill="#fff" stroke="#e59b62" stroke-width="1.200"/></svg><span>Point at Edge and Plane</span></div>
<div class="r" style="top:544px"><svg viewBox="0 0 20 20"><path d="M1 19C1 10 5 6 9 9c3 3 8 5 9-8" fill="none" stroke="#777" stroke-width=".7"/><circle cx="10" cy="10" r="2" fill="#e59b62"/><circle cx="18" cy="1" r="1" fill="#1ca64c"/><circle cx="1" cy="19" r="1" fill="#1ca64c"/></svg><span>Point Along Path</span></div>
</div>

</div></body></html>
